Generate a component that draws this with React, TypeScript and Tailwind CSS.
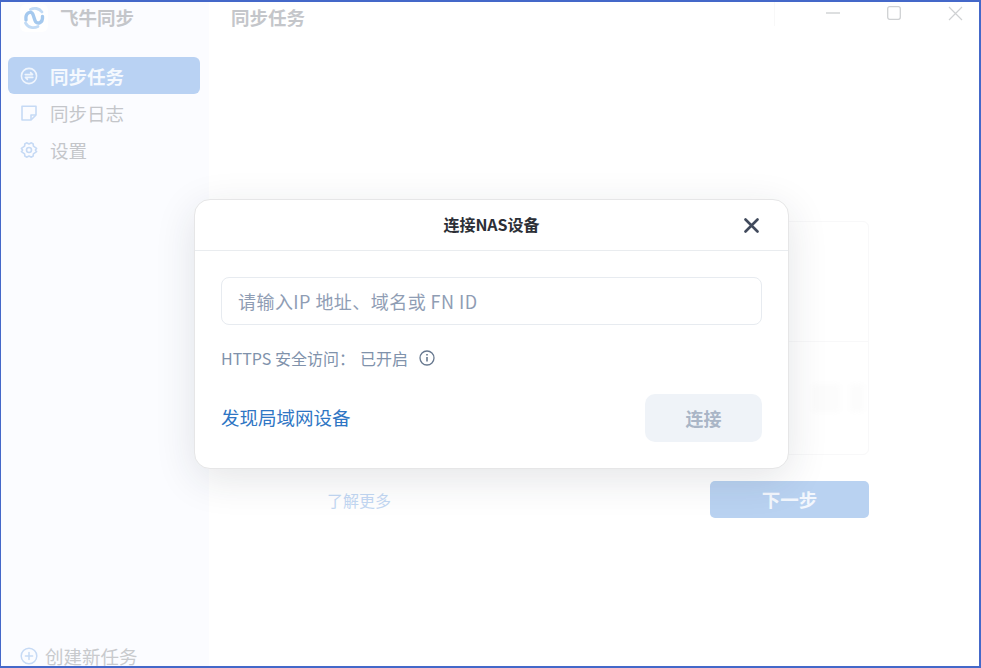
import React from "react";

const font = { fontFamily: '"Noto Sans CJK SC", "Noto Sans", sans-serif' };

function Logo() {
  return (
    <svg width="26" height="26" viewBox="0 0 26 26" fill="none">
      <path d="M5 15 C4 8 10 5 12 9.5 L14 15.5 C15.5 20 22 18.5 21.5 11.5" stroke="#a5c9ee" strokeWidth="3.4" strokeLinecap="round" />
      <path d="M4.5 18 C7 23 13 23.5 17 21.5 M21 7 C18 3 13 2.5 9.5 4.5" stroke="#c2dbf5" strokeWidth="2.8" strokeLinecap="round" />
    </svg>
  );
}

function NavIcon({ kind, color }: { kind: string; color: string }) {
  if (kind === "sync")
    return (
      <svg width="18" height="18" viewBox="0 0 18 18" fill="none" stroke={color} strokeWidth="1.6">
        <circle cx="9" cy="9" r="7.6" />
        <path d="M5.2 7.6 H12.6 L10.6 5.6 M12.8 10.4 H5.4 L7.4 12.4" strokeLinecap="round" strokeLinejoin="round" />
      </svg>
    );
  if (kind === "note")
    return (
      <svg width="18" height="18" viewBox="0 0 18 18" fill="none" stroke={color} strokeWidth="1.6">
        <path d="M2 2.2 H16 V11 L11 16 H2 Z" strokeLinejoin="round" />
        <path d="M11 16 V11 H16" strokeLinejoin="round" />
      </svg>
    );
  if (kind === "gear")
    return (
      <svg width="18" height="18" viewBox="0 0 18 18" fill="none" stroke={color} strokeWidth="1.6">
        <path d="M6.6 1.8 L9 3 L11.4 1.8 L13.2 3 L13.4 5.2 L16.6 7.4 L15.4 9 L16.6 10.6 L13.4 12.8 L13.2 15 L11.4 16.2 L9 15 L6.6 16.2 L4.8 15 L4.6 12.8 L1.4 10.6 L2.6 9 L1.4 7.4 L4.6 5.2 L4.8 3 Z" strokeLinejoin="round" />
        <circle cx="9" cy="9" r="2.5" />
      </svg>
    );
  return (
    <svg width="18" height="18" viewBox="0 0 18 18" fill="none" stroke={color} strokeWidth="1.5">
      <circle cx="9" cy="9" r="7.8" />
      <path d="M9 5.4 V12.6 M5.4 9 H12.6" strokeLinecap="round" />
    </svg>
  );
}

function NavItem({ kind, label, active }: { kind: string; label: string; active?: boolean }) {
  return (
    <div
      className={`flex h-[37px] items-center gap-[12px] rounded-[6px] pl-[12px] pt-[1px] text-[18.5px] ${
        active ? "bg-[#b9d2f3] font-bold text-[#f5f9fe]" : "text-[#c4c6ca]"
      }`}
    >
      <NavIcon kind={kind} color={active ? "#eff5fd" : "#c6daf5"} />
      <span className="leading-none">{label}</span>
    </div>
  );
}

export default function App() {
  return (
    <div
      className="relative flex h-[668px] w-[981px] overflow-hidden border-t-2 border-r-2 border-b-2 border-l border-[#4468c9] bg-white"
      style={font}
    >
      <aside className="flex w-[208px] shrink-0 flex-col bg-[#fbfcff]">
        <div className="flex h-[31px] items-center gap-[12px] pl-[19px]">
          <div className="flex h-[28px] w-[28px] items-center justify-center rounded-[6px] bg-white">
            <Logo />
          </div>
          <span className="text-[18.5px] font-bold leading-none text-[#c4c6ca]">飞牛同步</span>
        </div>
        <nav className="mb-auto mt-[24px] flex flex-col pl-[7px] pr-[9px]">
          <NavItem kind="sync" label="同步任务" active />
          <NavItem kind="note" label="同步日志" />
          <NavItem kind="gear" label="设置" />
        </nav>
        <div className="flex h-[20px] items-center gap-[7px] pl-[19px] text-[18.5px] text-[#c8cacd]">
          <NavIcon kind="plus" color="#c6daf5" />
          <span className="leading-none">创建新任务</span>
        </div>
      </aside>

      <main className="flex min-w-0 flex-1 flex-col">
        <header className="flex h-[31px] shrink-0 items-center justify-between pl-[22px]">
          <span className="text-[18.5px] font-bold leading-none text-[#c4c6ca]">同步任务</span>
          <div className="flex h-[24px] items-center self-start">
            <div className="mr-[51px] h-[24px] w-px bg-[#f8f8f8]" />
            <svg className="mr-[47px] mb-[2px]" width="14" height="14" viewBox="0 0 14 14" stroke="#cfd1d3" strokeWidth="1.4">
              <path d="M0 7 H14" />
            </svg>
            <svg className="mr-[47px] mb-[2px]" width="14" height="14" viewBox="0 0 14 14" fill="none" stroke="#cfd1d3" strokeWidth="1.3">
              <rect x="0.7" y="0.7" width="12.6" height="12.6" rx="2" />
            </svg>
            <svg className="mr-[16px] mb-[2px]" width="15" height="15" viewBox="0 0 15 15" stroke="#cfd1d3" strokeWidth="1.2">
              <path d="M1 1 L14 14 M14 1 L1 14" />
            </svg>
          </div>
        </header>

        <div className="ml-auto mr-[110px] mt-[188px] flex h-[234px] w-[400px] flex-col rounded-[6px] border border-[#f8f8f9]">
          <div className="h-[120px] border-b border-[#f8f8f9]" />
          <div className="flex flex-1 items-center justify-end gap-[10px] pr-[4px]">
            <div className="h-[28px] w-[28px] rounded bg-[#fcfcfc] blur-[2px]" />
            <div className="h-[28px] w-[14px] rounded bg-[#fcfcfc] blur-[2px]" />
          </div>
        </div>

        <div className="ml-auto mr-[110px] mt-[26px] flex w-[542px] items-center justify-between">
          <span className="text-[16px] leading-none text-[#c3d8f3]">了解更多</span>
          <button className="flex h-[37px] w-[159px] items-center justify-center rounded-[5px] bg-[#b9d2f1] text-[18.5px] font-bold text-[#f3f7fd]">
            下一步
          </button>
        </div>
      </main>

      <div className="absolute left-[193px] top-[197px] flex h-[270px] w-[595px] flex-col rounded-[16px] border border-[#e6e6e7] bg-white shadow-[0_10px_40px_rgba(30,40,60,0.12)]">
        <div className="relative flex h-[51px] shrink-0 items-center justify-center border-b border-[#e9ecef] pb-[2px]">
          <span className="text-[16px] font-bold leading-none text-[#2c2f36]">连接NAS设备</span>
          <svg className="absolute right-[29px] top-[18px]" width="15" height="15" viewBox="0 0 15 15" stroke="#414a5c" strokeWidth="2.6" strokeLinecap="round">
            <path d="M1.5 1.5 L13.5 13.5 M13.5 1.5 L1.5 13.5" />
          </svg>
        </div>
        <div className="flex flex-1 flex-col px-[26px] pt-[26px]">
          <div className="flex h-[48px] items-center rounded-[8px] border border-[#e7ebf0] pl-[16px] text-[18px] leading-none tracking-[0.45px] text-[#8f9db4]">
            请输入IP 地址、域名或 FN ID
          </div>
          <div className="mt-[23px] flex h-[20px] items-center text-[16px] leading-none text-[#8092ab]">
            <span>HTTPS 安全访问：</span>
            <span className="ml-[5px]">已开启</span>
            <svg className="ml-[11px]" width="16" height="16" viewBox="0 0 16 16" fill="none" stroke="#67788f" strokeWidth="1.3">
              <circle cx="8" cy="8" r="7" />
              <path d="M8 7 V11.6" strokeWidth="1.6" />
              <path d="M8 4 V5.4" strokeWidth="1.6" />
            </svg>
          </div>
          <div className="mt-[26px] flex items-center justify-between">
            <span className="relative -top-px text-[18.5px] leading-none text-[#2f76c4]">发现局域网设备</span>
            <button className="flex h-[48px] w-[117px] items-center justify-center rounded-[10px] bg-[#eff3f8] text-[18px] font-bold text-[#a9b5c6]">
              连接
            </button>
          </div>
        </div>
      </div>
    </div>
  );
}
